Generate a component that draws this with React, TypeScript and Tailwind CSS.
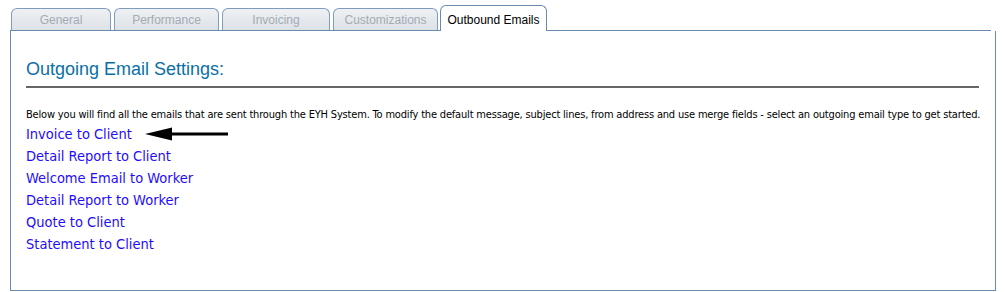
const tabs = [
  { label: "General", w: "w-[100px]" },
  { label: "Performance", w: "w-[105px]" },
  { label: "Invoicing", w: "w-[108px]" },
  { label: "Customizations", w: "w-[105px]" },
];

const emails = [
  "Invoice to Client",
  "Detail Report to Client",
  "Welcome Email to Worker",
  "Detail Report to Worker",
  "Quote to Client",
  "Statement to Client",
];

function Arrow() {
  return (
    <svg width="84" height="14" viewBox="0 0 84 14" className="ml-[13px] shrink-0">
      <polygon points="0,7 27,0.5 27,13.5" fill="#000" />
      <rect x="24" y="5.5" width="59" height="3" fill="#000" />
    </svg>
  );
}

export default function App() {
  return (
    <div className="h-[292px] w-[1005px] bg-white pl-[10px] font-['Liberation_Sans',Arial,sans-serif]">
      {/* Tabs */}
      <div className="flex h-[31px] w-[981px] items-end gap-[3px] border-b border-[#6a8bb0] pl-[1px]">
        {tabs.map((t) => (
          <div
            key={t.label}
            className={`${t.w} flex h-[22px] items-center justify-center rounded-t-[6px] border border-b-0 border-[#7f9cbd] bg-gradient-to-b from-[#eef1f4] to-[#dde2e7] text-[12px] text-[#a3abb3]`}
          >
            {t.label}
          </div>
        ))}
        <div className="-mb-px -ml-px flex h-[26px] w-[107px] items-start justify-center rounded-t-[6px] border border-b-0 border-[#6a8bb0] bg-white pt-[5px] text-[12px] text-black">
          Outbound Emails
        </div>
      </div>

      {/* Panel */}
      <div className="h-[260px] w-[986px] border-x border-b border-[#6a8bb0] px-[15px] pt-[27px]">
        <h2 className="w-[953px] border-b-2 border-[#666] pb-[6px] text-[18px] leading-[22px] text-[#0b6fa5]">
          Outgoing Email Settings:
        </h2>
        <p className="mt-[20px] whitespace-nowrap font-['DejaVu_Sans_Condensed','DejaVu_Sans',sans-serif] text-[11px] leading-[14px] tracking-[-0.18px] text-black">
          Below you will find all the emails that are sent through the EYH System. To modify the default message, subject lines, from address and use merge fields - select an outgoing email type to get started.
        </p>
        <ul className="pt-px font-['DejaVu_Sans_Condensed','DejaVu_Sans',sans-serif] text-[14.5px] leading-[22px] text-[#1f0cff]">
          {emails.map((e, i) => (
            <li key={e} className="flex items-center">
              <a href="#" className="no-underline">{e}</a>
              {i === 0 && <Arrow />}
            </li>
          ))}
        </ul>
      </div>
    </div>
  );
}
